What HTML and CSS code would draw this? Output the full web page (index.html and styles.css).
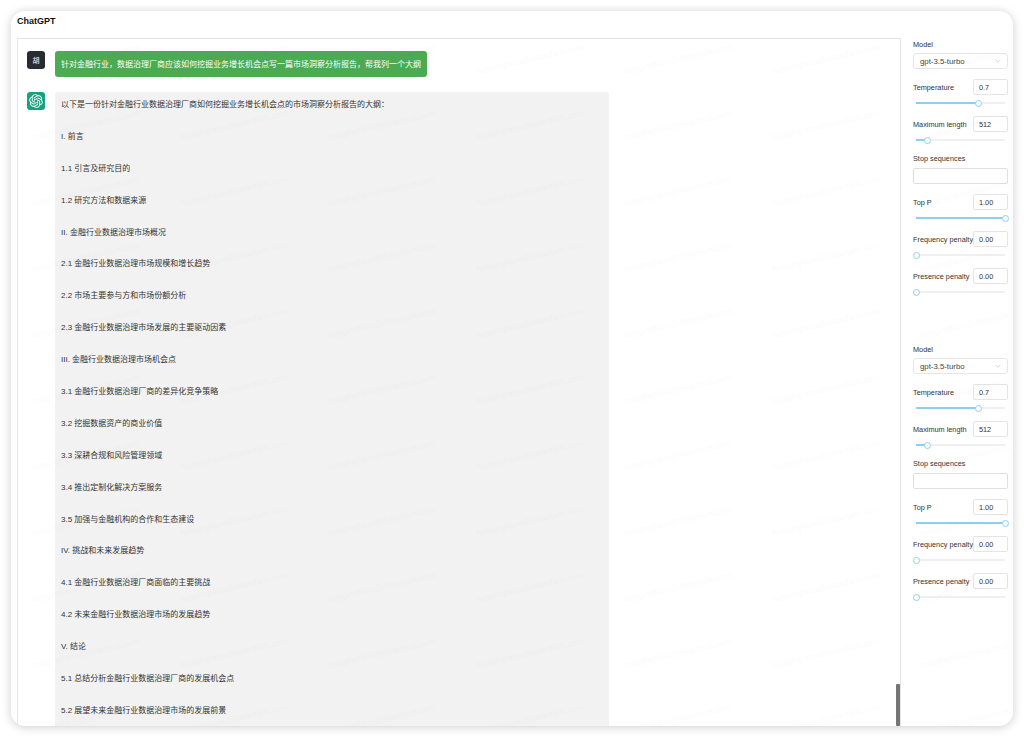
FILE: index.html
```html
<!DOCTYPE html>
<html lang="zh-CN">

<head>
    <meta charset="UTF-8">
    <title>ChatGPT</title>
    <link rel="stylesheet" href="styles.css">
</head>

<body>
    <div class="window">
        <div class="title">ChatGPT</div>
        <div class="main">
            <div class="chat">
                <div class="message">
                    <div class="avatar avatar-user">胡</div>
                    <div class="bubble bubble-user">针对金融行业&#xFF0C;数据治理厂商应该如何挖掘业务增长机会点写一篇市场洞察分析报告&#xFF0C;帮我列一个大纲</div>
                </div>
                <div class="message">
                    <div class="avatar avatar-bot">
                        <svg viewBox="0 0 41 41" width="14" height="14">
                            <path fill="#fff" d="M37.5324 16.8707C37.9808 15.5241 38.1363 14.0974 37.9886 12.6859C37.8409 11.2744 37.3934 9.91076 36.676 8.68622C35.6126 6.83404 33.9882 5.3676 32.0373 4.4985C30.0864 3.62941 27.9098 3.40259 25.8215 3.85078C24.8796 2.7893 23.7219 1.94125 22.4257 1.36341C21.1295 0.785575 19.7249 0.491269 18.3058 0.500197C16.1708 0.495044 14.0893 1.16803 12.3614 2.42214C10.6335 3.67624 9.34853 5.44666 8.6917 7.47815C7.30085 7.76286 5.98686 8.3414 4.8377 9.17505C3.68854 10.0087 2.73073 11.0782 2.02839 12.312C0.956464 14.1591 0.498905 16.2988 0.721698 18.4228C0.944492 20.5467 1.83612 22.5449 3.268 24.1293C2.81966 25.4759 2.66413 26.9026 2.81182 28.3141C2.95951 29.7256 3.40701 31.0892 4.12437 32.3138C5.18791 34.1659 6.8123 35.6322 8.76321 36.5013C10.7141 37.3704 12.8907 37.5973 14.9789 37.1492C15.9208 38.2107 17.0786 39.0587 18.3747 39.6366C19.6709 40.2144 21.0755 40.5087 22.4946 40.4998C24.6307 40.5054 26.7133 39.8321 28.4418 38.5772C30.1704 37.3223 31.4556 35.5506 32.1119 33.5179C33.5027 33.2332 34.8167 32.6547 35.9659 31.821C37.115 30.9874 38.0728 29.9178 38.7752 28.684C39.8458 26.8371 40.3023 24.6979 40.0789 22.5748C39.8556 20.4517 38.9639 18.4544 37.5324 16.8707ZM22.4978 37.8849C20.7443 37.8874 19.0459 37.2733 17.6994 36.1501C17.7601 36.117 17.8666 36.0586 17.936 36.0161L25.9004 31.4156C26.1003 31.3019 26.2663 31.137 26.3813 30.9378C26.4964 30.7386 26.5563 30.5124 26.5549 30.2825V19.0542L29.9213 20.998C29.9389 21.0068 29.9541 21.0198 29.9656 21.0359C29.977 21.052 29.9842 21.0707 29.9867 21.0902V30.3889C29.9842 32.375 29.1946 34.2791 27.7909 35.6841C26.3872 37.0892 24.4838 37.8806 22.4978 37.8849ZM6.39227 31.0064C5.51397 29.4888 5.19742 27.7107 5.49804 25.9832C5.55718 26.0187 5.66048 26.0818 5.73461 26.1244L13.699 30.7248C13.8975 30.8408 14.1233 30.902 14.3532 30.902C14.583 30.902 14.8088 30.8408 15.0073 30.7248L24.731 25.1103V28.9979C24.7321 29.0177 24.7283 29.0376 24.7199 29.0556C24.7115 29.0736 24.6988 29.0893 24.6829 29.1012L16.6317 33.7497C14.9096 34.7416 12.8643 35.0097 10.9447 34.4954C9.02506 33.9811 7.38785 32.7263 6.39227 31.0064ZM4.29707 13.6194C5.17156 12.0998 6.55279 10.9364 8.19885 10.3327C8.19885 10.4013 8.19491 10.5228 8.19491 10.6071V19.808C8.19351 20.0378 8.25334 20.2638 8.36823 20.4629C8.48312 20.6619 8.64893 20.8267 8.84863 20.9404L18.5723 26.5542L15.206 28.4979C15.1894 28.5089 15.1703 28.5155 15.1505 28.5173C15.1307 28.5191 15.1107 28.516 15.0924 28.5082L7.04046 23.8557C5.32135 22.8601 4.06716 21.2235 3.55289 19.3046C3.03862 17.3858 3.30624 15.3413 4.29707 13.6194ZM31.955 20.0556L22.2312 14.4411L25.5976 12.4981C25.6142 12.4872 25.6333 12.4805 25.6531 12.4787C25.6729 12.4769 25.6928 12.4801 25.7111 12.4879L33.7631 17.1364C34.9967 17.849 36.0017 18.8982 36.6606 20.1613C37.3194 21.4244 37.6047 22.849 37.4832 24.2684C37.3617 25.6878 36.8382 27.0432 35.9743 28.1759C35.1103 29.3086 33.9415 30.1717 32.6047 30.6641C32.6047 30.5947 32.6047 30.4733 32.6047 30.3889V21.188C32.6066 20.9586 32.5474 20.7328 32.4332 20.5338C32.319 20.3348 32.154 20.1698 31.955 20.0556ZM35.3055 15.0128C35.2464 14.9765 35.1431 14.9142 35.069 14.8717L27.1045 10.2712C26.906 10.1554 26.6803 10.0943 26.4504 10.0943C26.2206 10.0943 25.9948 10.1554 25.7963 10.2712L16.0726 15.8858V11.9982C16.0715 11.9783 16.0753 11.9585 16.0837 11.9405C16.0921 11.9225 16.1048 11.9068 16.1207 11.8949L24.1719 7.25025C25.4053 6.53903 26.8158 6.19376 28.2383 6.25482C29.6608 6.31589 31.0364 6.78077 32.2044 7.59508C33.3723 8.40939 34.2842 9.53945 34.8334 10.8531C35.3826 12.1667 35.5464 13.6095 35.3055 15.0128ZM14.2424 21.9419L10.8752 19.9981C10.8576 19.9893 10.8423 19.9763 10.8309 19.9602C10.8195 19.9441 10.8122 19.9254 10.8098 19.9058V10.6071C10.8107 9.18295 11.2173 7.78848 11.9819 6.58696C12.7466 5.38544 13.8377 4.42659 15.1275 3.82264C16.4173 3.21869 17.8524 2.99464 19.2649 3.1767C20.6775 3.35876 22.0089 3.93941 23.1034 4.85067C23.0427 4.88379 22.937 4.94215 22.8668 4.98473L14.9024 9.58517C14.7025 9.69878 14.5366 9.86356 14.4215 10.0626C14.3065 10.2616 14.2466 10.4877 14.2479 10.7175L14.2424 21.9419ZM16.071 17.9991L20.4018 15.4978L24.7325 17.9975V22.9985L20.4018 25.4983L16.071 22.9985V17.9991Z" />
                        </svg>
                    </div>
                    <div class="bubble bubble-bot">
                        <p>以下是一份针对金融行业数据治理厂商如何挖掘业务增长机会点的市场洞察分析报告的大纲&#xFF1A;</p>
                        <p>I. 前言</p>
                        <p>1.1 引言及研究目的</p>
                        <p>1.2 研究方法和数据来源</p>
                        <p>II. 金融行业数据治理市场概况</p>
                        <p>2.1 金融行业数据治理市场规模和增长趋势</p>
                        <p>2.2 市场主要参与方和市场份额分析</p>
                        <p>2.3 金融行业数据治理市场发展的主要驱动因素</p>
                        <p>III. 金融行业数据治理市场机会点</p>
                        <p>3.1 金融行业数据治理厂商的差异化竞争策略</p>
                        <p>3.2 挖掘数据资产的商业价值</p>
                        <p>3.3 深耕合规和风险管理领域</p>
                        <p>3.4 推出定制化解决方案服务</p>
                        <p>3.5 加强与金融机构的合作和生态建设</p>
                        <p>IV. 挑战和未来发展趋势</p>
                        <p>4.1 金融行业数据治理厂商面临的主要挑战</p>
                        <p>4.2 未来金融行业数据治理市场的发展趋势</p>
                        <p>V. 结论</p>
                        <p>5.1 总结分析金融行业数据治理厂商的发展机会点</p>
                        <p>5.2 展望未来金融行业数据治理市场的发展前景</p>
                    </div>
                </div>
                <div class="scroll-thumb"></div>
            </div>
            <div class="sidebar">
                <div class="group">
                    <div class="label">Model</div>
                    <div class="select">
                        <span>gpt-3.5-turbo</span>
                        <svg viewBox="0 0 10 6" width="6" height="4"><path d="M1 1l4 4 4-4" fill="none" stroke="#c4c4c4" stroke-width="1.2" /></svg>
                    </div>
                    <div class="row"><span class="label">Temperature</span><input class="num" value="0.7"></div>
                    <div class="slider"><i class="fill" style="width:70%"></i><i class="thumb"></i><i class="rest"></i></div>
                    <div class="row"><span class="label">Maximum length</span><input class="num" value="512"></div>
                    <div class="slider"><i class="fill" style="width:13%"></i><i class="thumb"></i><i class="rest"></i></div>
                    <div class="label label-stop">Stop sequences</div>
                    <input class="stop">
                    <div class="row"><span class="label">Top P</span><input class="num" value="1.00"></div>
                    <div class="slider"><i class="fill" style="width:100%"></i><i class="thumb"></i><i class="rest"></i></div>
                    <div class="row"><span class="label">Frequency penalty</span><input class="num" value="0.00"></div>
                    <div class="slider"><i class="fill" style="width:0%"></i><i class="thumb"></i><i class="rest"></i></div>
                    <div class="row"><span class="label">Presence penalty</span><input class="num" value="0.00"></div>
                    <div class="slider"><i class="fill" style="width:0%"></i><i class="thumb"></i><i class="rest"></i></div>
                </div>
                <div class="group">
                    <div class="label">Model</div>
                    <div class="select">
                        <span>gpt-3.5-turbo</span>
                        <svg viewBox="0 0 10 6" width="6" height="4"><path d="M1 1l4 4 4-4" fill="none" stroke="#c4c4c4" stroke-width="1.2" /></svg>
                    </div>
                    <div class="row"><span class="label">Temperature</span><input class="num" value="0.7"></div>
                    <div class="slider"><i class="fill" style="width:70%"></i><i class="thumb"></i><i class="rest"></i></div>
                    <div class="row"><span class="label">Maximum length</span><input class="num" value="512"></div>
                    <div class="slider"><i class="fill" style="width:13%"></i><i class="thumb"></i><i class="rest"></i></div>
                    <div class="label label-stop">Stop sequences</div>
                    <input class="stop">
                    <div class="row"><span class="label">Top P</span><input class="num" value="1.00"></div>
                    <div class="slider"><i class="fill" style="width:100%"></i><i class="thumb"></i><i class="rest"></i></div>
                    <div class="row"><span class="label">Frequency penalty</span><input class="num" value="0.00"></div>
                    <div class="slider"><i class="fill" style="width:0%"></i><i class="thumb"></i><i class="rest"></i></div>
                    <div class="row"><span class="label">Presence penalty</span><input class="num" value="0.00"></div>
                    <div class="slider"><i class="fill" style="width:0%"></i><i class="thumb"></i><i class="rest"></i></div>
                </div>
            </div>
        </div>
        <!-- faint watermark over the whole window -->
        <svg class="watermark" width="100%" height="100%">
            <defs>
                <pattern id="mark" width="148" height="66" patternUnits="userSpaceOnUse" patternTransform="translate(0 23)">
                    <text x="22" y="40" transform="rotate(-13 22 40)" font-family="Liberation Sans" font-size="8.5" fill="#000" fill-opacity="0.016">huggingface@datastack.com</text>
                </pattern>
            </defs>
            <rect width="100%" height="100%" fill="url(#mark)" />
        </svg>
    </div>
</body>

</html>
```

FILE: styles.css
```css
* {
    box-sizing: border-box;
    font-family: "Liberation Sans", "Noto Sans CJK SC", sans-serif;
}

html,
body {
    height: 100%;
    margin: 0;
    overflow: hidden;
    background: #fff;
}

body {
    padding: 11px;
}

.window {
    position: relative;
    display: flex;
    flex-direction: column;
    width: 1002px;
    height: 715px;
    overflow: hidden;
    background: #fff;
    border-radius: 14px;
    box-shadow: 0 1px 8px 1px rgba(0, 0, 0, 0.17);
}

.title {
    height: 27px;
    padding: 5px 6px 0;
    font-size: 9px;
    line-height: 10px;
    font-weight: 700;
    color: #111;
}

.main {
    display: flex;
    flex: 1;
    min-height: 0;
}

/* chat column */
.chat {
    position: relative;
    flex: 1;
    margin-left: 6px;
    padding: 12px 9px 0;
    overflow: hidden;
    border: 1px solid #e4e4e4;
    border-bottom: none;
}

.message {
    display: flex;
    gap: 10px;
    margin-bottom: 15px;
}

.avatar {
    display: flex;
    flex: none;
    align-items: center;
    justify-content: center;
    width: 18px;
    height: 18px;
    border-radius: 3px;
    font-size: 7px;
    color: #fff;
}

.avatar-user {
    background: #2a2a33;
}

.avatar-bot {
    background: #17a27d;
}

.bubble {
    border-radius: 3px;
    font-size: 8px;
    line-height: 16px;
}

.bubble-user {
    padding: 6px 6px 4px;
    background: #4cab52;
    color: #fff;
}

.bubble-bot {
    width: 554px;
    padding: 5px 6px 4px;
    background: #f2f2f2;
    color: #333;
}

.bubble-bot p {
    margin: 0 0 15.9px;
}

.scroll-thumb {
    position: absolute;
    right: 0;
    bottom: 0;
    width: 4px;
    height: 42px;
    background: #757575;
    border-radius: 1px;
}

/* settings column */
.sidebar {
    flex: none;
    width: 112px;
    padding: 2px 5px 0 12px;
}

.group {
    margin-bottom: 49px;
}

.label {
    font-size: 7.3px;
    line-height: 9px;
    color: #333;
    white-space: nowrap;
}

.select {
    display: flex;
    align-items: center;
    justify-content: space-between;
    height: 16px;
    margin: 4px 0 10px;
    padding: 0 6px;
    background: #fff;
    border: 1px solid #e6e6e6;
    border-radius: 3px;
    font-size: 7.8px;
    color: #444;
}

.row {
    display: flex;
    align-items: center;
    justify-content: space-between;
    height: 16px;
}

.num {
    width: 35px;
    height: 16px;
    padding: 0 5px;
    background: #fff;
    border: 1px solid #e4e4e4;
    border-radius: 2px;
    font-size: 7.3px;
    color: #333;
}

.label-stop {
    padding-top: 1px;
    margin-bottom: 5px;
}

.stop {
    display: block;
    width: 100%;
    height: 16px;
    margin-bottom: 10px;
    background: #fff;
    border: 1px solid #e0e0e0;
    border-radius: 2px;
}

.slider {
    display: flex;
    align-items: center;
    height: 8px;
    margin: 4px 3px 9px;
}

.fill {
    height: 2px;
    background: #91cdee;
}

.rest {
    flex: 1;
    min-width: 0;
    height: 2px;
    background: #f0f0f0;
}

.thumb {
    flex: none;
    width: 7px;
    height: 7px;
    margin: 0 -3.5px;
    position: relative;
    z-index: 1;
    background: #fff;
    border: 1px solid #91cdee;
    border-radius: 50%;
}

.watermark {
    position: absolute;
    top: 0;
    left: 0;
    pointer-events: none;
}
```
